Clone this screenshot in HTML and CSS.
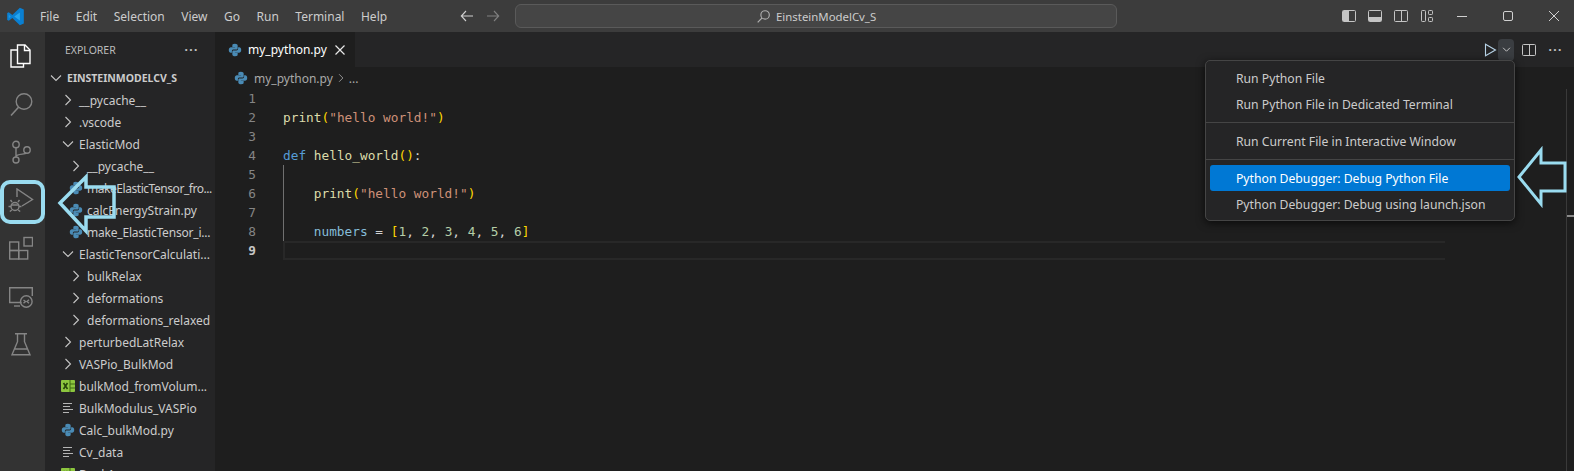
FILE: index.html
```html
<!DOCTYPE html>
<html lang="en">
<head>
<meta charset="utf-8">
<title>EinsteinModelCv_S</title>
<link rel="stylesheet" href="styles.css">
</head>
<body>
<svg class="defs" width="0" height="0" aria-hidden="true">
  <defs>
    <symbol id="py" viewBox="-1 -1 18 18">
      <path fill="#4a8bb5" d="M7.900 1C5.200 1 5 2.200 5 3v1.500h3.100V5H3.400C2.200 5 1 5.900 1 8s1 3 2.200 3H4.500V9.300C4.500 8.300 5.300 7.500 6.400 7.500h3.100C10.400 7.500 11 6.800 11 6V3c0-1.100-1.200-2-3.100-2z"/>
      <path fill="#4a8bb5" d="M8.100 15c2.700 0 2.900-1.200 2.900-2v-1.500H7.900V11h4.700c1.200 0 2.400-.9 2.400-3s-1-3-2.200-3h-1.300v1.700c0 1-.8 1.800-1.900 1.800H6.500C5.600 8.500 5 9.200 5 10v3c0 1.100 1.200 2 3.100 2z"/>
    </symbol>
    <symbol id="chev-r" viewBox="0 0 16 16"><path fill="none" stroke="currentColor" stroke-width="1.100" d="M5.500 3l5 5-5 5"/></symbol>
    <symbol id="chev-d" viewBox="0 0 16 16"><path fill="none" stroke="currentColor" stroke-width="1.100" d="M3 5.500l5 5 5-5"/></symbol>
    <symbol id="lines" viewBox="0 0 16 16"><path fill="none" stroke="#b5b5b5" stroke-width="1.200" d="M3 3.500h9M3 6.500h7M3 9.500h10M3 12.500h6"/></symbol>
    <symbol id="xl" viewBox="0 0 16 16"><rect x="1" y="2" width="14" height="12" rx="1" fill="#8dc63f"/><path stroke="#3d6b12" stroke-width="1" d="M10 2v12M10 6h5M10 10h5"/><path stroke="#26450a" stroke-width="1.600" fill="none" d="M3.500 5l4 6M7.500 5l-4 6"/></symbol>
  </defs>
</svg>

<div class="window">
  <header class="titlebar">
    <svg class="logo" viewBox="0 0 24 24" width="19" height="19"><path fill="#0a7fd1" d="M17.500 1L8 10 3.500 6.500 1.500 7.500v9l2 1L8 14l9.500 9 5-2.200V3.200z"/><path fill="#26a5ee" d="M17.500 7v10L10.500 12z"/><path fill="#1b97e6" d="M3.500 9.500L6 12l-2.500 2.500z"/></svg>
    <nav class="menu">
      <span>File</span><span>Edit</span><span>Selection</span><span>View</span><span>Go</span><span>Run</span><span>Terminal</span><span>Help</span>
    </nav>
    <div class="nav-arrows">
      <svg viewBox="0 0 16 16" width="16" height="16"><path fill="none" stroke="#d0d0d0" stroke-width="1.100" d="M14 8H2.500M7 3L2.300 8 7 13"/></svg>
      <svg viewBox="0 0 16 16" width="16" height="16"><path fill="none" stroke="#808080" stroke-width="1.100" d="M2 8h11.500M9 3l4.700 5L9 13"/></svg>
    </div>
    <div class="command">
      <svg viewBox="0 0 16 16" width="15" height="15"><circle cx="9.700" cy="6.300" r="4.500" fill="none" stroke="#b0b0b0" stroke-width="1.200"/><path stroke="#b0b0b0" stroke-width="1.300" d="M6.500 9.500L1.800 14.300"/></svg>
      <span>EinsteinModelCv_S</span>
    </div>
    <div class="layout-icons">
      <svg viewBox="0 0 16 16" width="16" height="16"><rect x="1.500" y="2.500" width="13" height="11" rx="1" fill="none" stroke="#c5c5c5"/><rect x="2" y="3" width="6" height="10" fill="#c5c5c5"/></svg>
      <svg viewBox="0 0 16 16" width="16" height="16"><rect x="1.500" y="2.500" width="13" height="11" rx="1" fill="none" stroke="#c5c5c5"/><rect x="2" y="9" width="12" height="4" fill="#c5c5c5"/></svg>
      <svg viewBox="0 0 16 16" width="16" height="16"><rect x="1.500" y="2.500" width="13" height="11" rx="1" fill="none" stroke="#c5c5c5"/><path stroke="#c5c5c5" d="M8.500 3v10"/></svg>
      <svg viewBox="0 0 16 16" width="16" height="16"><g fill="none" stroke="#c5c5c5"><rect x="2.500" y="2.500" width="4" height="11" rx=".8"/><rect x="9.500" y="2.500" width="4" height="4" rx=".8"/><rect x="9.500" y="9.500" width="4" height="4" rx=".8"/></g></svg>
    </div>
    <div class="win-controls">
      <svg viewBox="0 0 12 12" width="12" height="12"><path stroke="#d0d0d0" d="M1 6.500h10"/></svg>
      <svg viewBox="0 0 12 12" width="12" height="12"><rect x="1.500" y="1.500" width="9" height="9" rx="1.500" fill="none" stroke="#d0d0d0"/></svg>
      <svg viewBox="0 0 12 12" width="12" height="12"><path stroke="#d0d0d0" d="M1 1l10 10M11 1L1 11"/></svg>
    </div>
  </header>

  <div class="main">
    <aside class="activity">
      <svg class="act" viewBox="0 0 24 24" width="24" height="24"><g fill="none" stroke="#fff" stroke-width="1.400"><path d="M8.500 1h7.500l5 5v13.500H8.500z"/><path d="M15.500 1v5.500H21"/><path d="M8.500 6H2v17h12.500v-3.500"/></g></svg>
      <svg class="act" viewBox="0 0 24 24" width="24" height="24"><circle cx="15" cy="9.500" r="7.800" fill="none" stroke="#858585" stroke-width="1.400"/><path stroke="#858585" stroke-width="1.600" d="M9.500 15.200L2 23.500"/></svg>
      <svg class="act" viewBox="0 0 24 24" width="24" height="24"><g fill="none" stroke="#858585" stroke-width="1.400"><circle cx="7" cy="4.500" r="3.200"/><circle cx="7" cy="20" r="3"/><circle cx="18" cy="10" r="3.200"/><path d="M7 7.700V17M7 16.500c1-3 9-1.800 10.500-3.500"/></g></svg>
      <svg class="act" viewBox="0 0 26 24" width="26" height="24"><g fill="none" stroke="#858585" stroke-width="1.400"><path d="M9 9V1L24.500 11.500 14 18"/><circle cx="7" cy="18.500" r="4"/><path d="M4 14l-1.500-2M10 14l1.500-2M3 18.500H.5M11 18.500h2.500M3.800 22l-2 1.500M10.200 22l2 1.500M3 17h8"/></g></svg>
      <svg class="act" viewBox="0 0 24 24" width="24" height="24"><g fill="none" stroke="#858585" stroke-width="1.400"><rect x=".7" y="6" width="9" height="8.500"/><rect x=".7" y="14.500" width="9" height="8.500"/><rect x="9.700" y="14.500" width="9" height="8.500"/><rect x="15" y="1.500" width="8.500" height="8.500"/></g></svg>
      <svg class="act" viewBox="0 0 24 24" width="24" height="24"><g fill="none" stroke="#858585" stroke-width="1.400"><path d="M12.500 18.500H.7V3.700h22.600V12"/><path d="M5 22h6"/><circle cx="17.300" cy="17.500" r="5.800"/><path d="M14.500 16l2 1.500-2 1.800M20 15.700l-2 1.800 2 1.700"/></g></svg>
      <svg class="act" viewBox="0 0 24 24" width="24" height="24"><path fill="none" stroke="#858585" stroke-width="1.400" d="M6 1.700h12M8.500 1.700v8L3 22.700h18L15.500 9.700v-8M6 17h12"/></svg>
    </aside>

    <aside class="sidebar">
      <div class="side-head"><span>EXPLORER</span><b>···</b></div>
      <ul class="tree">
        <li class="root"><svg class="tw"><use href="#chev-d"/></svg><span>EINSTEINMODELCV_S</span></li>
        <li class="l1"><svg class="tw"><use href="#chev-r"/></svg><span>__pycache__</span></li>
        <li class="l1"><svg class="tw"><use href="#chev-r"/></svg><span>.vscode</span></li>
        <li class="l1"><svg class="tw"><use href="#chev-d"/></svg><span>ElasticMod</span></li>
        <li class="l2"><svg class="tw"><use href="#chev-r"/></svg><span>__pycache__</span></li>
        <li class="l2"><svg class="tw"><use href="#py"/></svg><span class="tight">makeElasticTensor_fro...</span></li>
        <li class="l2"><svg class="tw"><use href="#py"/></svg><span>calcEnergyStrain.py</span></li>
        <li class="l2"><svg class="tw"><use href="#py"/></svg><span class="snug">make_ElasticTensor_i...</span></li>
        <li class="l1"><svg class="tw"><use href="#chev-d"/></svg><span>ElasticTensorCalculati...</span></li>
        <li class="l2"><svg class="tw"><use href="#chev-r"/></svg><span>bulkRelax</span></li>
        <li class="l2"><svg class="tw"><use href="#chev-r"/></svg><span>deformations</span></li>
        <li class="l2"><svg class="tw"><use href="#chev-r"/></svg><span>deformations_relaxed</span></li>
        <li class="l1"><svg class="tw"><use href="#chev-r"/></svg><span>perturbedLatRelax</span></li>
        <li class="l1"><svg class="tw"><use href="#chev-r"/></svg><span>VASPio_BulkMod</span></li>
        <li class="l1"><svg class="tw"><use href="#xl"/></svg><span>bulkMod_fromVolum...</span></li>
        <li class="l1"><svg class="tw"><use href="#lines"/></svg><span>BulkModulus_VASPio</span></li>
        <li class="l1"><svg class="tw"><use href="#py"/></svg><span>Calc_bulkMod.py</span></li>
        <li class="l1"><svg class="tw"><use href="#lines"/></svg><span>Cv_data</span></li>
        <li class="l1"><svg class="tw"><use href="#xl"/></svg><span>Book1</span></li>
      </ul>
    </aside>

    <section class="editor">
      <div class="tabs">
        <div class="tab"><svg class="tw"><use href="#py"/></svg><span>my_python.py</span>
          <svg class="close" viewBox="0 0 16 16" width="16" height="16"><path stroke="#e8e8e8" stroke-width="1.200" d="M3.500 3.500l9 9M12.500 3.500l-9 9"/></svg>
        </div>
        <div class="tab-actions">
          <svg viewBox="0 0 16 16" width="16" height="16"><path fill="none" stroke="#b8d4e8" stroke-width="1.100" d="M3.500 2.200v11.600L13.500 8z"/></svg>
          <span class="run-drop"><svg viewBox="0 0 16 16" width="11" height="11"><path fill="none" stroke="#c5c5c5" stroke-width="1.400" d="M3 5.500l5 5 5-5"/></svg></span>
          <svg class="split" viewBox="0 0 16 16" width="16" height="16"><rect x="1.500" y="2.500" width="13" height="11" rx="1" fill="none" stroke="#c5c5c5"/><path stroke="#c5c5c5" d="M8.500 3v10"/></svg>
          <b>···</b>
        </div>
      </div>
      <div class="crumbs"><svg class="tw"><use href="#py"/></svg><span>my_python.py</span><svg class="crumb-sep"><use href="#chev-r"/></svg><span>...</span></div>
      <div class="code-wrap">
        <div class="code">
          <div class="ln"><i>1</i><code></code></div>
          <div class="ln"><i>2</i><code><span class="fn">print</span><span class="b1">(</span><span class="st">"hello world!"</span><span class="b1">)</span></code></div>
          <div class="ln"><i>3</i><code></code></div>
          <div class="ln"><i>4</i><code><span class="kw">def</span> <span class="fn">hello_world</span><span class="b1">()</span>:</code></div>
          <div class="ln ind"><i>5</i><code></code></div>
          <div class="ln ind"><i>6</i><code>    <span class="fn">print</span><span class="b1">(</span><span class="st">"hello world!"</span><span class="b1">)</span></code></div>
          <div class="ln ind"><i>7</i><code></code></div>
          <div class="ln ind"><i>8</i><code>    <span class="var">numbers</span> = <span class="b1">[</span><span class="nm">1</span>, <span class="nm">2</span>, <span class="nm">3</span>, <span class="nm">4</span>, <span class="nm">5</span>, <span class="nm">6</span><span class="b1">]</span></code></div>
          <div class="ln cur"><i>9</i><code></code></div>
        </div>
        <div class="ruler"></div>
      </div>
    </section>
  </div>

  <div class="arrow-ring"></div>
  <svg class="arrow arrow-left" viewBox="0 0 62 64" width="62" height="64"><path fill="none" stroke="#9adcf0" stroke-width="3.500" d="M4 31L30 5v10h28v30H30v14z"/></svg>

  <div class="dropdown">
    <div class="item">Run Python File</div>
    <div class="item">Run Python File in Dedicated Terminal</div>
    <hr>
    <div class="item">Run Current File in Interactive Window</div>
    <hr>
    <div class="item active">Python Debugger: Debug Python File</div>
    <div class="item">Python Debugger: Debug using launch.json</div>
  </div>
  <svg class="arrow arrow-right" viewBox="0 0 56 68" width="56" height="68"><path fill="none" stroke="#9adcf0" stroke-width="3" d="M5 33L27 6v13h24v28H27v13z"/></svg>
</div>
</body>
</html>
```
FILE: styles.css
```css
* { box-sizing: border-box; }
html, body { margin: 0; padding: 0; height: 100%; overflow: hidden; background: #1e1e1e; }
.defs { position: absolute; }
ul { list-style: none; margin: 0; padding: 0; }
.window {
  position: relative; width: 1574px; height: 471px; overflow: hidden;
  display: flex; flex-direction: column;
  font-family: "Noto Sans", "Open Sans", sans-serif; font-size: 12px; color: #cccccc;
}
.titlebar { height: 32px; flex: none; display: flex; align-items: center; background: #3c3c3c; }
.logo { margin-left: 6px; flex: none; }
.menu { display: flex; gap: 16.500px; margin-left: 15px; color: #cccccc; font-size: 12px; }
.nav-arrows { display: flex; gap: 10px; margin-left: 72px; }
.command {
  width: 602px; height: 24px; margin-left: 14px; border: 1px solid #5a5a5a; border-radius: 6px; background: #454545;
  display: flex; align-items: center; justify-content: center; gap: 5px; color: #cccccc; font-size: 11.400px;
}
.layout-icons { display: flex; gap: 10px; margin-left: 224px; }
.win-controls { display: flex; gap: 34px; margin-left: 21px; }

.main { flex: 1; display: flex; min-height: 0; }
.activity {
  width: 45px; flex: none; background: #333333; display: flex; flex-direction: column; align-items: center;
  padding: 12px 3px 0 0; gap: 24px;
}
.act { flex: none; }
.sidebar { width: 170px; flex: none; background: #252526; overflow: hidden; }
.side-head { height: 35px; display: flex; align-items: center; justify-content: space-between; padding: 0 16px 0 20px; font-size: 10.500px; color: #bbbbbb; }
.side-head b { font-weight: 700; font-size: 12px; letter-spacing: 1.500px; color: #c5c5c5; }
.tree li { height: 22px; display: flex; align-items: center; color: #cccccc; white-space: nowrap; overflow: hidden; }
.tw { width: 16px; height: 16px; flex: none; color: #c5c5c5; }
.tree span { margin-left: 3px; }
.tree .tight { letter-spacing: -0.450px; }
.tree .snug { letter-spacing: -0.200px; }
.root { padding-left: 3px; font-weight: 700; font-size: 10.500px; color: #cccccc; }
.l1 { padding-left: 15px; }
.l2 { padding-left: 23px; }

.editor { flex: 1; min-width: 0; background: #1e1e1e; display: flex; flex-direction: column; }
.tabs { height: 35px; flex: none; display: flex; justify-content: space-between; background: #252526; }
.tab { width: 140px; background: #1e1e1e; display: flex; align-items: center; padding-left: 12px; color: #ffffff; font-size: 12px; }
.tab span { margin-left: 5px; }
.close { margin-left: 5px; }
.tab-actions { display: flex; align-items: center; padding-right: 11px; }
.run-drop { width: 16px; height: 22px; background: #3a3d41; border-radius: 4px; display: flex; align-items: center; justify-content: center; }
.split { margin-left: 7px; }
.tab-actions b { margin-left: 11px; font-size: 12px; letter-spacing: 1.500px; color: #c5c5c5; }
.crumbs { height: 22px; flex: none; display: flex; align-items: center; padding-left: 18px; color: #a9a9a9; font-size: 12px; }
.crumbs span { margin-left: 5px; }
.crumb-sep { width: 12px; height: 12px; color: #a9a9a9; margin-left: 2px; }
.crumbs .crumb-sep + span { margin-left: 2px; }
.code-wrap { flex: 1; display: flex; justify-content: space-between; min-height: 0; }
.code { font-family: "DejaVu Sans Mono", "Liberation Mono", monospace; font-size: 12.790px; }
.ln { height: 19px; display: flex; line-height: 20px; position: relative; width: 1230px; }
.ln i { width: 41px; flex: none; text-align: right; font-style: normal; color: #858585; }
.ln code { margin-left: 27px; flex: 1; font: inherit; white-space: pre; color: #d4d4d4; }
.ind::after { content: ""; position: absolute; left: 68px; top: 0; bottom: 0; width: 1px; background: #707070; }
.cur i { color: #c6c6c6; font-weight: 700; }
.cur code { border: 2px solid #282828; border-right: 0; }
.fn { color: #dcdcaa; }
.b1 { color: #ffd700; }
.st { color: #ce9178; }
.kw { color: #569cd6; }
.var { color: #85bcd8; }
.nm { color: #b5cea8; }
.ruler { width: 8px; flex: none; border-left: 1px solid #3a3a3a; position: relative; }
.ruler::after { content: ""; position: absolute; left: 0; top: 126px; width: 7px; height: 2px; background: #8a8a8a; }

.arrow-ring { position: absolute; left: 0; top: 180px; width: 45px; height: 44px; border: 4px solid #9adcf0; border-radius: 10px; }
.arrow { position: absolute; }
.arrow-left { left: 56px; top: 172px; }
.arrow-right { left: 1514px; top: 144px; }
.dropdown {
  position: absolute; left: 1205px; top: 60px; width: 310px; height: 161px; background: #252526;
  border: 1px solid #454545; border-radius: 5px; padding: 4px; color: #cccccc; font-size: 12.200px; box-shadow: 0 2px 8px #000a;
}
.item { height: 26px; line-height: 28px; padding-left: 26px; border-radius: 3px; white-space: nowrap; }
.item.active { background: #0078d4; color: #fff; }
.dropdown hr { border: 0; border-top: 1px solid #454545; margin: 5px -4px; }
```
